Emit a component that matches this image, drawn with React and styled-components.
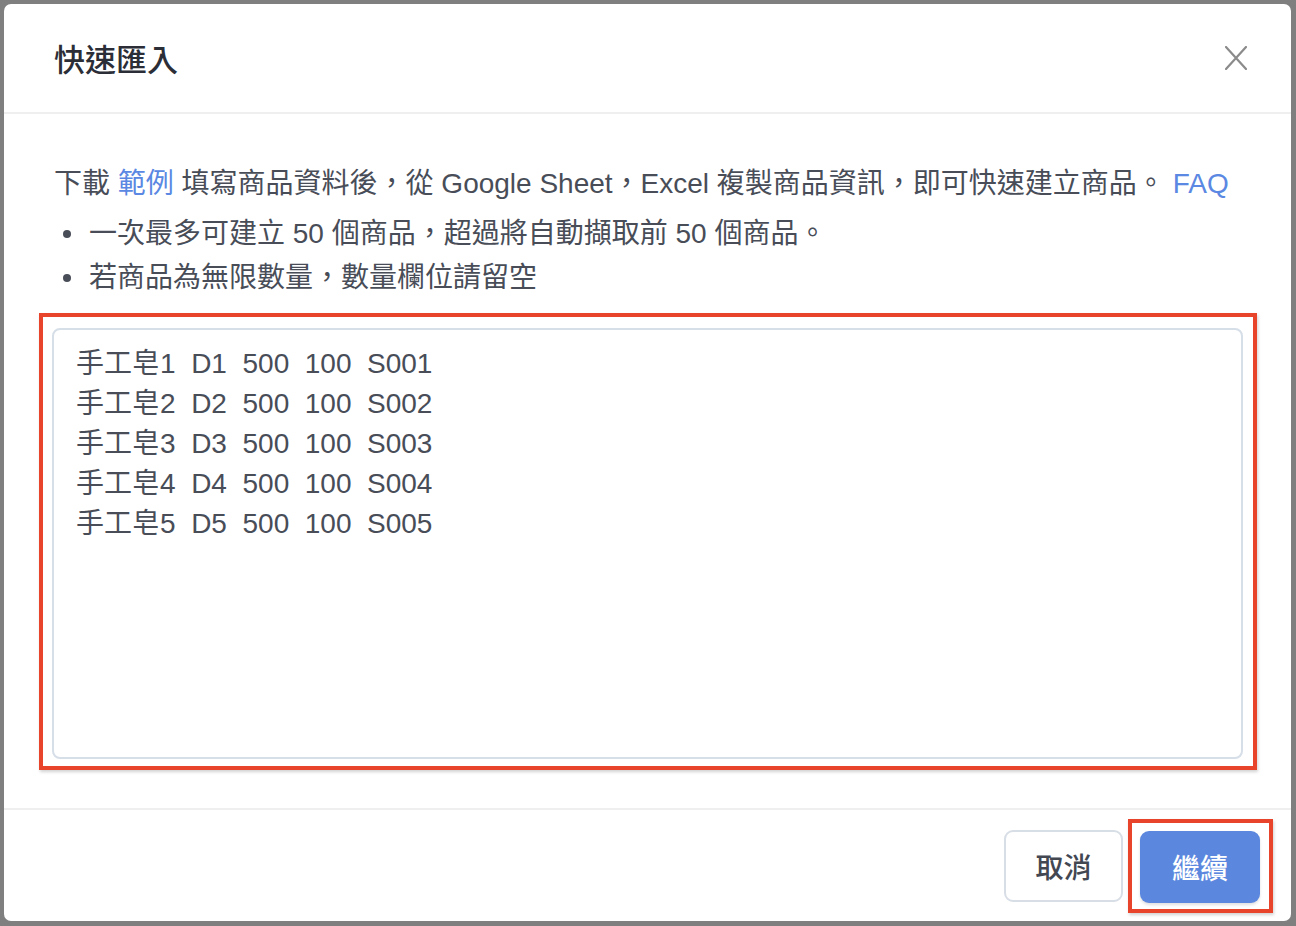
import React from "react";
import styled, { createGlobalStyle } from "styled-components";

const GlobalStyle = createGlobalStyle`
  html, body {
    margin: 0;
    padding: 0;
    background: #7f7f7f;
  }
  body {
    font-family: "Liberation Sans", "Noto Sans CJK TC", sans-serif;
  }
  * { box-sizing: border-box; }
`;

const Overlay = styled.div`
  width: 1296px;
  height: 926px;
  padding: 4px 5px 5px 4px;
`;

const Modal = styled.div`
  width: 1287px;
  height: 917px;
  background: #ffffff;
  border-radius: 7px;
  display: flex;
  flex-direction: column;
  overflow: hidden;
`;

const Header = styled.div`
  height: 110px;
  flex: none;
  display: flex;
  align-items: center;
  justify-content: space-between;
  padding: 0 44px 0 50px;
  border-bottom: 2px solid #efefef;
`;

const Title = styled.h2`
  margin: 0 0 2px 0;
  font-family: "Noto Sans CJK TC", sans-serif;
  font-size: 31px;
  font-weight: 500;
  color: #2b2e36;
`;

const CloseButton = styled.button`
  border: none;
  background: none;
  padding: 0;
  width: 22px;
  height: 24px;
  display: flex;
  cursor: pointer;
`;

const Body = styled.div`
  flex: 1;
  padding: 48px 48px 38px 48px;
  display: flex;
  flex-direction: column;
  color: #484d58;
`;

const Intro = styled.p`
  margin: 0 0 0 2px;
  font-size: 28px;
  line-height: 44px;
  white-space: nowrap;
`;

const Link = styled.a`
  color: #5a88e2;
  text-decoration: none;
`;

const Notes = styled.ul`
  list-style: none;
  margin: 6px 0 0 0;
  padding: 0;
`;

const Note = styled.li`
  position: relative;
  font-size: 28px;
  line-height: 44px;
  padding-left: 37px;

  &::before {
    content: "";
    position: absolute;
    left: 11px;
    top: 18px;
    width: 8px;
    height: 8px;
    border-radius: 50%;
    background: #484d58;
  }
`;

const Highlight = styled.div`
  border: 4px solid #e8442b;
  box-shadow: 1px 2px 3px rgba(0, 0, 0, 0.18);
  padding: ${(p) => p.$pad};
  margin: ${(p) => p.$margin || "0"};
  display: flex;
`;

const PasteArea = styled.textarea`
  width: 100%;
  height: 431px;
  resize: none;
  border: 2px solid #d6dee8;
  border-radius: 8px;
  padding: 14px 22px;
  font-family: "Liberation Sans", "Noto Sans CJK TC", sans-serif;
  font-size: 28px;
  line-height: 40px;
  color: #484d58;
  outline: none;
  background: #fff;
`;

const Footer = styled.div`
  height: 113px;
  flex: none;
  border-top: 2px solid #efefef;
  display: flex;
  align-items: center;
  justify-content: flex-end;
  gap: 5px;
  padding: 0 18px 0 0;
`;

const Button = styled.button`
  height: 72px;
  min-width: ${(p) => (p.$primary ? "120px" : "119px")};
  padding: 0 24px;
  border-radius: 9px;
  font-family: "Noto Sans CJK TC", sans-serif;
  font-size: 28px;
  font-weight: 500;
  cursor: pointer;
  border: ${(p) => (p.$primary ? "none" : "2px solid #d8dee6")};
  background: ${(p) => (p.$primary ? "#5b87de" : "#ffffff")};
  color: ${(p) => (p.$primary ? "#ffffff" : "#424752")};
  box-shadow: ${(p) => (p.$primary ? "0 2px 3px rgba(0,0,0,0.12)" : "none")};
`;

const rows = [
  "手工皂1  D1  500  100  S001",
  "手工皂2  D2  500  100  S002",
  "手工皂3  D3  500  100  S003",
  "手工皂4  D4  500  100  S004",
  "手工皂5  D5  500  100  S005",
].join("\n");

function CloseIcon() {
  return (
    <svg width="22" height="24" viewBox="0 0 22 24" fill="none">
      <path
        d="M1 1 L21 23 M21 1 L1 23"
        stroke="#8b8b8b"
        strokeWidth="2.2"
        strokeLinecap="round"
      />
    </svg>
  );
}

export default function App() {
  return (
    <>
      <GlobalStyle />
      <Overlay>
        <Modal>
          <Header>
            <Title>快速匯入</Title>
            <CloseButton aria-label="close">
              <CloseIcon />
            </CloseButton>
          </Header>
          <Body>
            <Intro>
              下載 <Link href="#">範例</Link> 填寫商品資料後，從 Google Sheet，Excel
              複製商品資訊，即可快速建立商品。 <Link href="#">FAQ</Link>
            </Intro>
            <Notes>
              <Note>一次最多可建立 50 個商品，超過將自動擷取前 50 個商品。</Note>
              <Note>若商品為無限數量，數量欄位請留空</Note>
            </Notes>
            <Highlight $pad="11px 10px 7px 9px" $margin="13px -14px 0 -13px">
              <PasteArea defaultValue={rows} spellCheck={false} />
            </Highlight>
          </Body>
          <Footer>
            <Button>取消</Button>
            <Highlight $pad="8px 9px 6px 8px">
              <Button $primary>繼續</Button>
            </Highlight>
          </Footer>
        </Modal>
      </Overlay>
    </>
  );
}
